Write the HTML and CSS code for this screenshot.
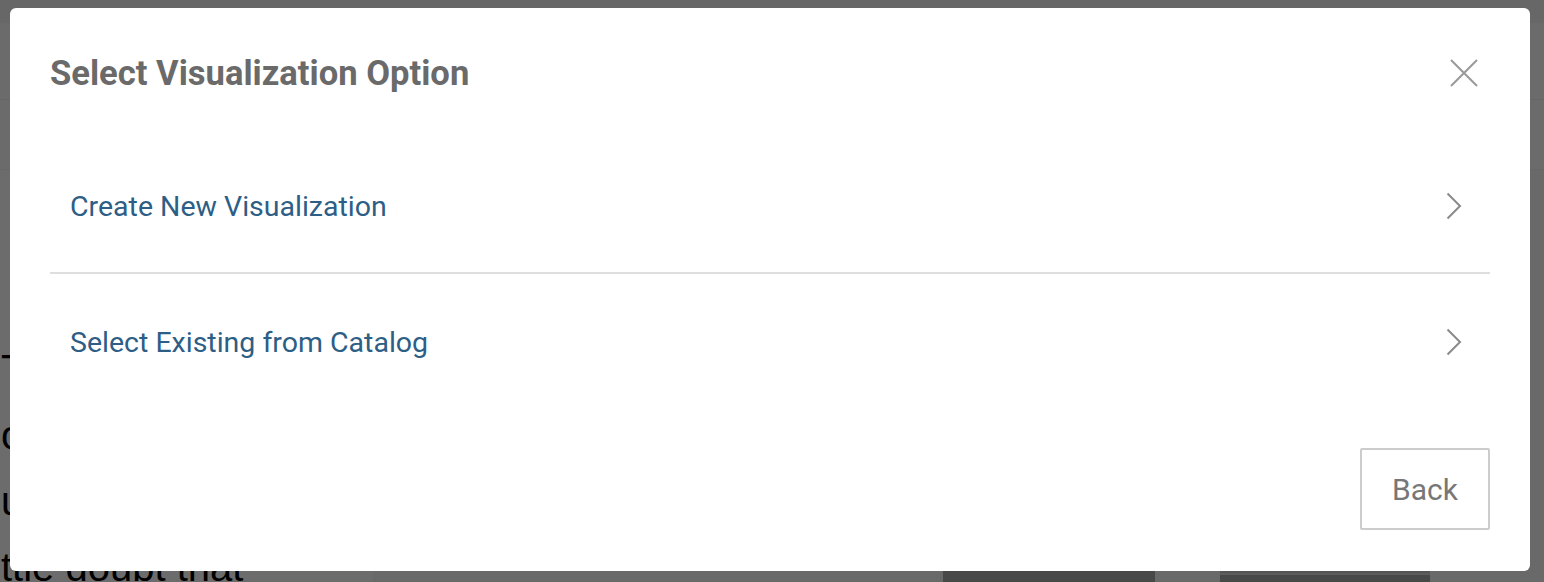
FILE: index.html
```html
<!DOCTYPE html>
<html lang="en">
<head>
    <meta charset="UTF-8">
    <meta name="viewport" content="width=device-width, initial-scale=1.0">
    <title>Select Visualization Option</title>
    <link rel="stylesheet" href="styles.css">
</head>
<body>
    <div class="page">
        <div class="page-topbar"></div>
        <div class="page-header"></div>
        <div class="page-subheader"></div>
        <div class="page-main">
            <div class="page-article">
                <p>To</p>
                <p>o</p>
                <p>ut</p>
                <p>ttle doubt that</p>
            </div>
            <div class="page-actions">
                <span class="page-btn"></span>
                <span class="page-btn page-btn-alt"></span>
            </div>
        </div>
    </div>

    <div class="overlay">
        <div class="modal" role="dialog" aria-labelledby="modal-title">
            <div class="modal-header">
                <h2 id="modal-title">Select Visualization Option</h2>
                <button class="modal-close" aria-label="Close">
                    <svg width="28" height="28" viewBox="0 0 28 28" fill="none" stroke="#999" stroke-width="2">
                        <path d="M1 1L27 27M27 1L1 27"/>
                    </svg>
                </button>
            </div>
            <ul class="option-list">
                <li class="option-item">
                    <a href="#">Create New Visualization</a>
                    <svg class="chevron" width="16" height="28" viewBox="0 0 16 28" fill="none" stroke="#8a8a8a" stroke-width="2">
                        <path d="M1.5 1.5L14 14L1.5 26.5"/>
                    </svg>
                </li>
                <li class="option-item">
                    <a href="#">Select Existing from Catalog</a>
                    <svg class="chevron" width="16" height="28" viewBox="0 0 16 28" fill="none" stroke="#8a8a8a" stroke-width="2">
                        <path d="M1.5 1.5L14 14L1.5 26.5"/>
                    </svg>
                </li>
            </ul>
            <div class="modal-footer">
                <button class="btn-back">Back</button>
            </div>
        </div>
    </div>
</body>
</html>
```

FILE: styles.css
```css
:root {
    --title-color: #6a6a6a;
    --link-color: #2d5e85;
    --border-color: #dedede;
    --icon-color: #8a8a8a;
}
* {
    box-sizing: border-box;
}
html, body {
    height: 100%;
}
body {
    margin: 0;
    overflow: hidden;
    font-family: Roboto, 'Liberation Sans', sans-serif;
    background-color: #fbfbfb;
}

/* page behind the dialog */
.page {
    height: 100%;
    display: flex;
    flex-direction: column;
}
.page-topbar {
    flex: none;
    height: 23px;
    background-color: #f2f2f2;
}
.page-header {
    flex: none;
    height: 77px;
    background-color: #fcfcfc;
    border-bottom: 1px solid #f0f0f0;
}
.page-subheader {
    flex: none;
    height: 70px;
    background-color: #fdfdfd;
    border-bottom: 1px solid #f4f4f4;
}
.page-main {
    flex: 1;
    min-height: 0;
    display: flex;
    align-items: flex-start;
    justify-content: space-between;
    background: linear-gradient(to right, #ffffff 0, #ffffff 373px, #f8f8f8 373px);
}
.page-article {
    margin-top: 166px;
    padding-left: 1px;
    font-family: 'Liberation Sans', Arial, sans-serif;
    font-size: 40px;
    color: #000;
}
.page-article p {
    margin: 0;
    line-height: 66px;
}
.page-actions {
    align-self: flex-end;
    display: flex;
    gap: 65px;
    margin-right: 114px;
}
.page-btn {
    width: 212px;
    height: 11px;
    background-color: #aaaaaa;
}
.page-btn-alt {
    width: 210px;
    border-top: 2px solid #c7c7c7;
    box-shadow: inset 0 2px 0 #d9d9d9;
}

/* dialog */
.overlay {
    position: fixed;
    inset: 0;
    background-color: rgba(0, 0, 0, 0.575);
    display: flex;
    align-items: flex-start;
    justify-content: flex-start;
    padding: 8px 0 0 10px;
}
.modal {
    width: 1520px;
    height: 563px;
    background-color: #fff;
    border-radius: 6px;
    padding: 40px 40px 41px;
    display: flex;
    flex-direction: column;
}
.modal-header {
    display: flex;
    justify-content: space-between;
    align-items: center;
    height: 50px;
}
.modal-header h2 {
    margin: 0;
    font-size: 34.6px;
    font-weight: 700;
    color: var(--title-color);
}
.modal-close {
    border: none;
    background: none;
    padding: 0;
    margin-right: 12px;
    cursor: pointer;
    display: flex;
}
.option-list {
    list-style: none;
    margin: 42px 0 0;
    padding: 0;
}
.option-item {
    display: flex;
    align-items: center;
    justify-content: space-between;
    height: 132px;
    padding: 0 28px 0 20px;
}
.option-item + .option-item {
    border-top: 2px solid var(--border-color);
    height: 138px;
}
.option-item a {
    color: var(--link-color);
    text-decoration: none;
    font-size: 28.5px;
}
.modal-footer {
    margin-top: auto;
    display: flex;
    justify-content: flex-end;
}
.btn-back {
    width: 130px;
    height: 82px;
    background-color: #fff;
    border: 2px solid #cccccc;
    border-radius: 2px;
    font-family: Roboto, 'Liberation Sans', sans-serif;
    font-size: 30px;
    color: #777;
    cursor: pointer;
}
```
